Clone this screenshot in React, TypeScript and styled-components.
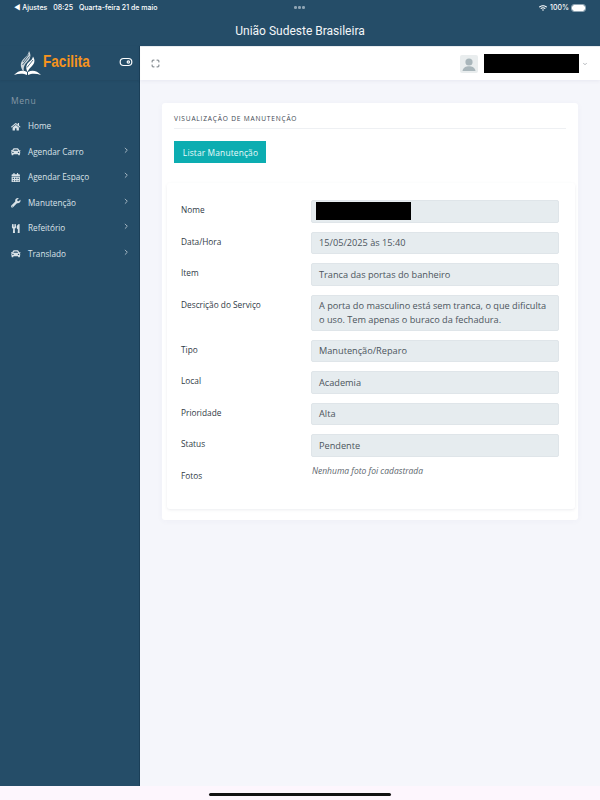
import React from "react";
import styled, { createGlobalStyle } from "styled-components";
import { FaHome, FaCar, FaCalendarAlt, FaWrench, FaUtensils, FaWifi } from "react-icons/fa";
import { FiChevronRight, FiChevronDown } from "react-icons/fi";
import { LuMaximize, LuToggleRight } from "react-icons/lu";

const Global = createGlobalStyle`
  html, body { margin: 0; padding: 0; width: 600px; height: 800px; overflow: hidden; }
  body { font-family: "Open Sans", "Noto Sans", sans-serif; background: #f5f6fb; }
  * { box-sizing: border-box; }
`;

const Page = styled.div`
  width: 600px; height: 800px; display: flex; flex-direction: column;
`;
const TopArea = styled.header`
  height: 46px; background: #254d68; color: #fff; display: flex; flex-direction: column;
`;
const StatusBar = styled.div`
  height: 15px; padding: 1px 15px 0 14px; display: flex; align-items: center; justify-content: space-between;
  font-family: Inter, sans-serif; font-size: 7px; font-weight: 500; line-height: 14px; position: relative;
`;
const StatusLeft = styled.div`display: flex; gap: 6px; align-items: center;`;
const StatusRight = styled.div`display: flex; gap: 3px; align-items: center;`;
const Dots = styled.div`
  position: absolute; left: 294px; top: 6px; display: flex; gap: 1.5px;
  i { width: 2.5px; height: 2.5px; border-radius: 50%; background: #8fa5b4; display: block; }
`;
const Battery = styled.span`
  width: 13px; height: 6px; border-radius: 2px; background: #fff; display: block; outline: 1px solid #8fa5b4;
`;
const Title = styled.div`
  text-align: center; font-family: Roboto, sans-serif; font-size: 12px; line-height: 20px; margin-top: 6px; color: #f3f6f8;
`;
const Body = styled.div`flex: 1; display: flex; min-height: 0;`;
const Sidebar = styled.aside`
  width: 140px; background: #254d68; border-right: 1px solid #1b3f58; display: flex; flex-direction: column;
`;
const Brand = styled.div`
  height: 34px; flex: none; display: flex; align-items: center; padding-left: 14px; position: relative; gap: 2px;
  box-shadow: 0 1px 2px rgba(20,50,70,.15);
`;
const BrandName = styled.span`
  font-family: "Liberation Sans", Arial, sans-serif; font-weight: 700; font-size: 17px; color: #f7941d;
  transform: scaleX(.8); transform-origin: left center; display: inline-block; margin-top: -2px;
`;
const BrandToggle = styled.span`
  position: absolute; left: 119px; top: 9px; color: #fff; display: flex; font-size: 14px;
`;
const MenuTitle = styled.div`
  font-size: 8.5px; letter-spacing: .6px; color: #8598a6; padding: 15px 0 0 11px; line-height: 12px; height: 33px;
`;
const Nav = styled.nav`display: flex; flex-direction: column;`;
const NavItem = styled.div`
  height: 25.5px; display: flex; align-items: center; padding-left: 11px; color: #dbe3e8; font-size: 8.2px; position: relative;
`;
const NavIcon = styled.span`
  width: 17px; flex: none; font-size: 9.5px; display: flex; color: #d9e2e7; padding-top: 1px;
`;
const NavChevron = styled.span`
  position: absolute; left: 122px; top: 7px; font-size: 8.5px; display: flex; color: #d5dee4;
`;
const Main = styled.main`flex: 1; min-width: 0; display: flex; flex-direction: column; background: #f5f6fb;`;
const TopBar = styled.div`
  height: 34px; flex: none; background: #fff; display: flex; align-items: center; justify-content: space-between;
  padding: 0 12px 0 11px; box-shadow: 0 1px 4px rgba(60,70,110,.08); border-top: 1px solid #e8ecef;
`;
const Expand = styled.span`display: flex; color: #3f4a52; font-size: 9px;`;
const UserBox = styled.div`display: flex; align-items: center;`;
const Avatar = styled.div`
  width: 18px; height: 18px; border-radius: 2px; background: #e9edee; display: flex; margin-right: 6px; overflow: hidden;
`;
const Redacted = styled.div<{ $w: number; $h: number }>`
  width: ${p => p.$w}px; height: ${p => p.$h}px; background: #000; flex: none;
`;
const Caret = styled.span`margin-left: 3px; font-size: 6px; display: flex; color: #6c757d;`;
const Content = styled.div`padding: 23px 22px 0 22px;`;
const Card = styled.section`
  height: 417px; background: #fff; border-radius: 3px; padding: 0 3px 0 5px;
  box-shadow: 0 1px 6px rgba(70,80,130,.04); display: flex; flex-direction: column;
`;
const CardHeader = styled.div`
  margin: 0 9px 0 7px; height: 26px; border-bottom: 1px solid #eef0f3; font-size: 6.6px; font-weight: 500; color: #3c4650;
  letter-spacing: .8px; line-height: 31px; text-transform: uppercase; white-space: nowrap;
`;
const ListButton = styled.button`
  margin: 12px 0 0 7px; width: 92px; height: 22px; flex: none; background: #0cadb1; color: #e9fbfb; border: 0; padding: 0 0 0 1px;
  font: 400 8.4px "Open Sans", sans-serif; letter-spacing: .15px; text-align: center; align-self: flex-start;
`;
const Inner = styled.div`
  margin-top: 20px; height: 326px; background: #fff; border-radius: 3px; box-shadow: 0 1px 3px rgba(70,80,110,.1);
  padding: 17px 16px 0 14px; display: grid; grid-template-columns: 130px 248px; row-gap: 9px; align-content: start;
`;
const Label = styled.div`
  font-size: 8.3px; font-weight: 500; color: #2f3a46; line-height: 12px; padding-top: 4px; white-space: nowrap;
`;
const Field = styled.div<{ $tall?: boolean }>`
  height: ${p => (p.$tall ? "36px" : "22.5px")}; background: #e6ecef; border: 1px solid #dfe5e9; border-radius: 2px;
  padding: ${p => (p.$tall ? "3.5px 7px" : "0 7px")}; font-size: 9.2px; color: #4c555d; line-height: ${p => (p.$tall ? "13.5px" : "21px")};
  display: flex; align-items: ${p => (p.$tall ? "flex-start" : "center")}; white-space: pre;
`;
const RedactedField = styled(Field)`padding: 0 4px;`;
const Empty = styled.div`font-size: 8.5px; font-style: italic; color: #5d666d; line-height: 12px; margin: -1px 0 0 1px;`;
const HomeStrip = styled.div`
  height: 14px; flex: none; background: #fdf6fd; display: flex; justify-content: center; padding-top: 7px;
`;
const HomeBar = styled.div`width: 182px; height: 3px; border-radius: 2px; background: #111;`;

const Logo = () => (
  <svg width="27" height="25" viewBox="0 0 27 25" aria-hidden="true">
    <path d="M0 24C4 19.5 9 18.5 13 21V24C9 22 4.5 22.5 0 24Z" fill="#fff" />
    <path d="M27 24C23 19.5 18 18.5 14 21V24C18 22 22.5 22.5 27 24Z" fill="#fff" />
    <path d="M10 21C5.5 16 6 11 10 7.5C12.5 5 14.5 3.5 15 0C17.5 4 16.5 8 13.5 10.5C10.5 13.5 9 16.5 10 21Z" fill="#cfd8dd" />
    <path d="M13.5 21C11.5 17 12 13.5 15 11C17 9.5 18.5 8 19 5.5C21.5 9.5 20.5 12.5 18 15C16 17 14.5 18.5 13.5 21Z" fill="#fff" />
    <path d="M8.5 14L15.5 5.5M9 11L14.5 3.5M13 16.5L19 9" stroke="#254d68" strokeWidth=".8" fill="none" />
  </svg>
);

const Person = () => (
  <svg width="18" height="18" viewBox="0 0 18 18" aria-hidden="true">
    <circle cx="9" cy="7" r="3.6" fill="#a9b6bb" />
    <path d="M2.5 16C3 12.5 6 11.2 9 11.2S15 12.5 15.5 16Z" fill="#a9b6bb" />
  </svg>
);

const navItems = [
  { label: "Home", icon: <FaHome />, more: false },
  { label: "Agendar Carro", icon: <FaCar />, more: true },
  { label: "Agendar Espaço", icon: <FaCalendarAlt />, more: true },
  { label: "Manutenção", icon: <FaWrench />, more: true },
  { label: "Refeitório", icon: <FaUtensils />, more: true },
  { label: "Translado", icon: <FaCar />, more: true },
];

const fields = [
  { label: "Data/Hora", value: "15/05/2025 às 15:40" },
  { label: "Item", value: "Tranca das portas do banheiro" },
  { label: "Descrição do Serviço", value: "A porta do masculino está sem tranca, o que dificulta\no uso. Tem apenas o buraco da fechadura.", tall: true },
  { label: "Tipo", value: "Manutenção/Reparo" },
  { label: "Local", value: "Academia" },
  { label: "Prioridade", value: "Alta" },
  { label: "Status", value: "Pendente" },
];

export default function App() {
  return (
    <Page>
      <Global />
      <TopArea>
        <StatusBar>
          <StatusLeft>
            <span>◀ Ajustes</span>
            <span>08:25</span>
            <span>Quarta-feira 21 de maio</span>
          </StatusLeft>
          <Dots><i /><i /><i /></Dots>
          <StatusRight>
            <FaWifi size={8} />
            <span>100%</span>
            <Battery />
          </StatusRight>
        </StatusBar>
        <Title>União Sudeste Brasileira</Title>
      </TopArea>
      <Body>
        <Sidebar>
          <Brand>
            <Logo />
            <BrandName>Facilita</BrandName>
            <BrandToggle><LuToggleRight /></BrandToggle>
          </Brand>
          <MenuTitle>Menu</MenuTitle>
          <Nav>
            {navItems.map(item => (
              <NavItem key={item.label}>
                <NavIcon>{item.icon}</NavIcon>
                {item.label}
                {item.more && <NavChevron><FiChevronRight /></NavChevron>}
              </NavItem>
            ))}
          </Nav>
        </Sidebar>
        <Main>
          <TopBar>
            <Expand><LuMaximize /></Expand>
            <UserBox>
              <Avatar><Person /></Avatar>
              <Redacted $w={95} $h={19} />
              <Caret><FiChevronDown /></Caret>
            </UserBox>
          </TopBar>
          <Content>
            <Card>
              <CardHeader>Visualização de Manutenção</CardHeader>
              <ListButton type="button">Listar Manutenção</ListButton>
              <Inner>
                <Label>Nome</Label>
                <RedactedField><Redacted $w={95} $h={18} /></RedactedField>
                {fields.map(f => (
                  <React.Fragment key={f.label}>
                    <Label>{f.label}</Label>
                    <Field $tall={f.tall}>{f.value}</Field>
                  </React.Fragment>
                ))}
                <Label>Fotos</Label>
                <Empty>Nenhuma foto foi cadastrada</Empty>
              </Inner>
            </Card>
          </Content>
        </Main>
      </Body>
      <HomeStrip><HomeBar /></HomeStrip>
    </Page>
  );
}
